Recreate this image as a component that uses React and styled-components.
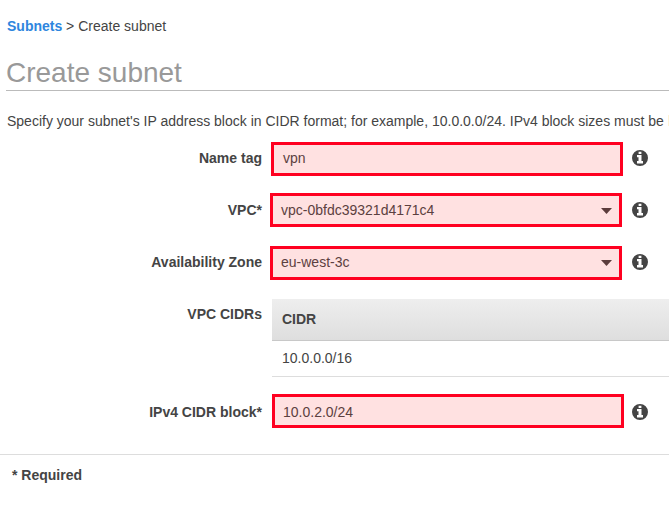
import React from "react";
import styled, { createGlobalStyle } from "styled-components";

const GlobalStyle = createGlobalStyle`
  * { box-sizing: border-box; }
  html, body { margin: 0; background: #fff; overflow: hidden; }
  body { font: 14px/20px "Liberation Sans", Arial, sans-serif; color: #444; }
`;

const Page = styled.main`
  display: flex;
  flex-direction: column;
  height: 506px;
  overflow: hidden;
`;

const Breadcrumb = styled.nav`
  padding: 16px 0 0 7px;
`;

const Crumb = styled.a`
  color: #2e86de;
  font-weight: bold;
  text-decoration: none;
`;

const Title = styled.h1`
  margin: 18px 0 0 6px;
  height: 37px;
  border-bottom: 1px solid #bbb;
  color: #999;
  font-size: 28px;
  font-weight: normal;
  line-height: 38px;
`;

const Intro = styled.p`
  margin: 20px 0 0 7px;
  white-space: nowrap;
`;

const Rest = styled.span`
  margin-left: 0.6px;
`;

const Form = styled.form`
  display: flex;
  flex-direction: column;
  padding-top: 7px;
`;

const Row = styled.div`
  display: grid;
  grid-template-columns: 262px 370px 16px;
  align-items: start;
  height: ${(p) => p.$height || 52}px;
`;

const Label = styled.label`
  padding-top: 10px;
  font-weight: bold;
  text-align: right;
`;

const Field = styled.div`
  display: flex;
  align-items: center;
  justify-content: space-between;
  width: 352px;
  height: 34px;
  margin: ${(p) => p.$top}px 0 0 ${(p) => p.$left}px;
  padding: 0 7px 0 ${(p) => p.$indent || 9}px;
  border: 3px solid #ff0020;
  background: #ffe1e1;
  color: #5c4040;
`;

const Value = styled.span`
  display: block;
  transform: translateY(${(p) => p.$shift || 0}px);
`;

const Caret = styled.span`
  width: 11px;
  height: 6px;
  margin-top: ${(p) => p.$drop || 0}px;
  background: #5c3c3c;
  clip-path: polygon(0 0, 100% 0, 50% 100%);
`;

const Info = styled.svg`
  display: block;
  width: 16px;
  height: 16px;
  margin-top: 12px;
  fill: #444;
`;

const Table = styled.div`
  width: 397px;
  margin: 5px 0 0 10px;
`;

const HeadCell = styled.div`
  height: 42px;
  padding: 10px;
  border-bottom: 1px solid #c8c8c8;
  background: linear-gradient(#eee, #dedede);
  font-weight: bold;
`;

const Cell = styled.div`
  height: 36px;
  padding: 7px 10px;
  border-bottom: 1px solid #ddd;
`;

const Footer = styled.footer`
  padding: 10px 12px;
  border-top: 1px solid #ddd;
  font-weight: bold;
`;

const InfoIcon = () => (
  <Info viewBox="0 0 16 16" role="img" aria-label="Information">
    <path
      fillRule="evenodd"
      d="M8 0a8 8 0 1 0 0 16a8 8 0 1 0 0-16zM6.6 1.7h2.8v2.3h-2.8zM5 5.1h4.5v6h1.5v2.4H5v-2.4h1.5V7.2H5z"
    />
  </Info>
);

function FormField({ label, value, select, left, top, indent, shift, drop, height }) {
  return (
    <Row $height={height}>
      <Label>{label}</Label>
      <Field $left={left} $top={top} $indent={indent}>
        <Value $shift={shift}>{value}</Value>
        {select && <Caret $drop={drop} />}
      </Field>
      <InfoIcon />
    </Row>
  );
}

export default function App() {
  return (
    <Page>
      <GlobalStyle />
      <Breadcrumb>
        <Crumb>Subnets</Crumb> &gt; Create subnet
      </Breadcrumb>
      <Title>Create subnet</Title>
      <Intro>
        Specify your subnet's IP address block in CIDR format; for example,
        10.0.0.0/24. IPv4 block sizes must be <Rest>between a /16 netmask and /28 netmask.</Rest>
      </Intro>
      <Form>
        <FormField label="Name tag" value="vpn" left={9} top={4} shift={-1} />
        <FormField label="VPC*" value="vpc-0bfdc39321d4171c4" left={8} top={3} indent={8} drop={2} select />
        <FormField label="Availability Zone" value="eu-west-3c" left={8} top={4} indent={8} shift={-1} select />
        <Row $height={98}>
          <Label>VPC CIDRs</Label>
          <Table>
            <HeadCell>CIDR</HeadCell>
            <Cell>10.0.0.0/16</Cell>
          </Table>
        </Row>
        <FormField label="IPv4 CIDR block*" value="10.0.2.0/24" left={10} top={2} indent={8} shift={1} height={62} />
      </Form>
      <Footer>* Required</Footer>
    </Page>
  );
}
